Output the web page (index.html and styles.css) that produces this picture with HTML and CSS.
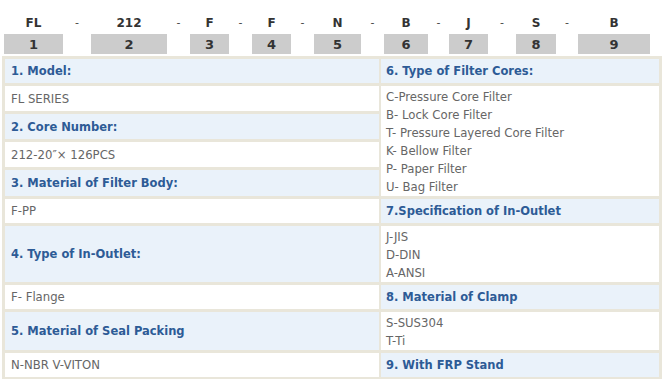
FILE: index.html
```html
<!DOCTYPE html>
<html>
<head>
<meta charset="utf-8">
<link rel="stylesheet" href="styles.css">
</head>
<body>
<div class="codes">
  <span class="code">FL</span><span class="dash">-</span>
  <span class="code">212</span><span class="dash">-</span>
  <span class="code">F</span><span class="dash">-</span>
  <span class="code">F</span><span class="dash">-</span>
  <span class="code">N</span><span class="dash">-</span>
  <span class="code">B</span><span class="dash">-</span>
  <span class="code">J</span><span class="dash">-</span>
  <span class="code">S</span><span class="dash">-</span>
  <span class="code">B</span>
  <span class="num">1</span><span class="gap"></span>
  <span class="num">2</span><span class="gap"></span>
  <span class="num">3</span><span class="gap"></span>
  <span class="num">4</span><span class="gap"></span>
  <span class="num">5</span><span class="gap"></span>
  <span class="num">6</span><span class="gap"></span>
  <span class="num">7</span><span class="gap"></span>
  <span class="num">8</span><span class="gap"></span>
  <span class="num">9</span>
</div>
<div class="spec">
  <div class="cell head l1h">1. Model:</div>
  <div class="cell head r6h">6. Type of Filter Cores:</div>
  <div class="cell val l1v">FL SERIES</div>
  <div class="cell val multi r6v">
    <div>C-Pressure Core Filter</div>
    <div>B- Lock Core Filter</div>
    <div>T- Pressure Layered Core Filter</div>
    <div>K- Bellow Filter</div>
    <div>P- Paper Filter</div>
    <div>U- Bag Filter</div>
  </div>
  <div class="cell head l2h">2. Core Number:</div>
  <div class="cell val l2v">212-20″× 126PCS</div>
  <div class="cell head l3h">3. Material of Filter Body:</div>
  <div class="cell val l3v">F-PP</div>
  <div class="cell head r7h">7.Specification of In-Outlet</div>
  <div class="cell head l4h">4. Type of In-Outlet:</div>
  <div class="cell val multi r7v">
    <div>J-JIS</div>
    <div>D-DIN</div>
    <div>A-ANSI</div>
  </div>
  <div class="cell val l4v">F- Flange</div>
  <div class="cell head r8h">8. Material of Clamp</div>
  <div class="cell head l5h">5. Material of Seal Packing</div>
  <div class="cell val multi r8v">
    <div>S-SUS304</div>
    <div>T-Ti</div>
  </div>
  <div class="cell val l5v">N-NBR V-VITON</div>
  <div class="cell head r9h">9. With FRP Stand</div>
</div>
</body>
</html>
```
FILE: styles.css
```css
html, body {
  margin: 0;
  padding: 0;
  background: #ffffff;
}
body {
  font-family: "DejaVu Sans", Verdana, sans-serif;
  padding: 13px 0 0 0;
}
.codes {
  display: grid;
  margin-left: 4px;
  grid-template-columns: 59px 28px 76px 23px 39px 23px 39px 23px 47px 23px 44px 21px 39px 28px 40px 22px 72px;
  grid-template-rows: 19px 20px;
  row-gap: 2px;
  width: 646px;
}
.code, .dash {
  display: flex;
  align-items: center;
  justify-content: center;
  font-weight: bold;
  font-size: 12px;
  color: #333333;
}
.dash {
  font-weight: normal;
  font-size: 11px;
  color: #444444;
}
.num {
  display: flex;
  align-items: center;
  justify-content: center;
  background: #cccccc;
  font-weight: bold;
  font-size: 13px;
  color: #333333;
}
.spec {
  margin: 2px 0 0 2px;
  width: 654px;
  padding: 3px 3px 2px 3px;
  background: #e9e6da;
  display: grid;
  grid-template-columns: 374px 278px;
  grid-template-rows: 24px 25px 25px 25px 26px 24px 56px 24px 38px 24px;
  column-gap: 2px;
  row-gap: 3px;
}
.cell {
  display: flex;
  align-items: center;
  padding-left: 6px;
}
.head {
  background: #eaf2fa;
  color: #2d5b96;
  font-weight: bold;
  font-size: 11.5px;
}
.val {
  background: #ffffff;
  color: #666666;
  font-size: 11.7px;
}
.multi {
  flex-direction: column;
  align-items: flex-start;
  justify-content: center;
  line-height: 18px;
  padding-top: 2px;
  box-sizing: border-box;
}
.r6h, .r6v, .r7h, .r7v, .r8h, .r8v, .r9h { padding-left: 5px; }
.l1h { grid-column: 1; grid-row: 1; }
.l1v { grid-column: 1; grid-row: 2; }
.l2h { grid-column: 1; grid-row: 3; }
.l2v { grid-column: 1; grid-row: 4; }
.l3h { grid-column: 1; grid-row: 5; }
.l3v { grid-column: 1; grid-row: 6; }
.l4h { grid-column: 1; grid-row: 7; }
.l4v { grid-column: 1; grid-row: 8; }
.l5h { grid-column: 1; grid-row: 9; }
.l5v { grid-column: 1; grid-row: 10; }
.r6h { grid-column: 2; grid-row: 1; }
.r6v { grid-column: 2; grid-row: 2 / 6; }
.r7h { grid-column: 2; grid-row: 6; }
.r7v { grid-column: 2; grid-row: 7; }
.r8h { grid-column: 2; grid-row: 8; }
.r8v { grid-column: 2; grid-row: 9; }
.r9h { grid-column: 2; grid-row: 10; }
```
